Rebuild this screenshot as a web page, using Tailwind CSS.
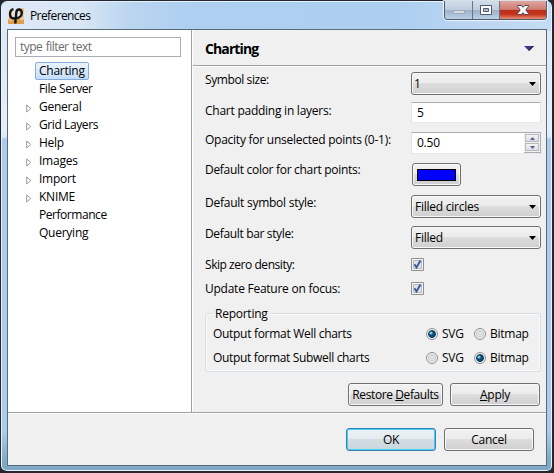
<!DOCTYPE html>
<html lang="en">
<head>
<meta charset="utf-8">
<title>Preferences</title>
<script src="https://cdn.jsdelivr.net/npm/@tailwindcss/browser@4"></script>
</head>
<body class="w-[554px] h-[473px] overflow-hidden bg-[#25262c] text-black text-[12px] leading-[16px] font-['Open_Sans','Noto_Sans',sans-serif] tracking-[-0.25px] whitespace-nowrap">
<div class="w-[554px] h-[473px] flex flex-col rounded-[7px] border border-[#25262f] border-r-2 border-b-2 bg-[linear-gradient(180deg,#b0cff0_0,#b0cff0_28px,#dce8f6_30px,#e6eef8_130px,#dce8f6_136px,#adcbed_138px,#adcbed_430px,#80a9c5_460px)] shadow-[inset_0_0_0_1px_#e5f4fc]">
  <header class="relative h-[29px] shrink-0 mx-px mt-px rounded-t-[6px] flex items-center pl-[6px] bg-[linear-gradient(90deg,#dfe9f7_0,#d8e6f5_80px,#b9d5f0_130px,#aecff1_190px,#abcef1_390px,#bad5f1_460px,#c5dcf3_551px)]">
    <svg class="w-[16px] h-[16px] -mt-[2px]" viewBox="0 0 16 16"><path d="M0 2h5v13H0z" fill="#f0e6d2"/><path d="M0 11l3 2 2-2 3 2 3-3 3 2 2-1v5H0z" fill="#dd9f4c"/><path d="M11 0h5v10l-3 3z" fill="#efc98c"/><path d="M1 7l3 4-3 3z" fill="#efb55a"/><path d="M5.500 1.200C.8 2.500.8 10.500 6 10.500c5 0 7.800-2.500 7.800-5.500 0-4.500-5-4.800-5.500-.5L7.300 15.500" fill="none" stroke="#171310" stroke-width="2.400"/><path d="M5 2.500v6" stroke="#f7dba5"/></svg>
    <h1 class="ml-[6px] -mt-[2px] tracking-[-0.6px]">Preferences</h1>
    <div class="absolute right-[4px] -top-px flex h-[19px] w-[103px] rounded-b-[4px] border border-t-0 border-[#505b6c] overflow-hidden shadow-[0_0_1px_1px_#edf6ff]">
      <div class="w-[28px] border-r border-[#65758a] bg-[linear-gradient(#d1deeb_0,#bfcddd_48%,#9eb1c8_50%,#b9d0e6)] flex justify-center"><svg width="14" height="18" viewBox="0 0 14 18"><rect x="1.500" y="9.500" width="11" height="3" fill="#d6dce6" stroke="#a1acbb"/></svg></div>
      <div class="w-[27px] border-r border-[#65758a] bg-[linear-gradient(#d1deeb_0,#bfcddd_48%,#9eb1c8_50%,#b9d0e6)] flex justify-center"><svg width="14" height="18" viewBox="0 0 14 18"><path d="M1.500 4.500h11v9h-11z" fill="#fafcff" stroke="#505970"/><path d="M4.500 7.500h5v3h-5z" fill="#a9bad4" stroke="#505970"/></svg></div>
      <div class="flex-1 bg-[linear-gradient(#dfa69e_0,#cf7d72_47%,#b92d1a_50%,#c73520_75%,#e29275)] flex justify-center"><svg width="14" height="18" viewBox="0 0 14 18"><path d="M1.500 4.500h4L7 6.300l1.500-1.800h4v1L9.800 9l2.700 3.500v1h-4L7 11.700l-1.500 1.800h-4v-1L4.200 9 1.500 5.500z" fill="#f7f7f9" stroke="#57434d"/></svg></div>
    </div>
  </header>

  <main class="ml-[6px] w-[540px] h-[437px] -mt-[2px] shrink-0 border border-[#586b78] bg-[#f0f0f0] flex flex-col relative">
    <div class="flex h-[382px] shrink-0">
      <nav class="w-[184px] shrink-0 bg-white border-r border-[#a0a0a0] pt-[7px]">
        <div class="ml-[7px] w-[166px] h-[20px] border border-[#abadb3] pl-[4px] leading-[18px] text-[#6d6d6d] tracking-[-0.8px] [word-spacing:1px]"><span class="tracking-[-0.55px]">type filter text</span></div>
        <ul class="mt-[5px] pl-[27px]">
          <li class="h-[18px]"><span class="block w-[54px] h-[18px] rounded-[2px] border border-[#84acdd] bg-linear-to-b from-[#ebf4fd] to-[#c4ddfb] pl-[3px] leading-[16px]">Charting</span></li>
          <li class="h-[18px] pl-[4px] leading-[18px] tracking-[-0.4px]">File Server</li>
          <li class="h-[18px] flex items-center"><svg class="-ml-[9px] mr-[7px] mt-[2px] w-[6px] h-[9px]" viewBox="0 0 6 9"><path d="M.7 1v7L4.800 4.500z" fill="#fff" stroke="#9b9b9b"/></svg>General</li>
          <li class="h-[18px] flex items-center tracking-[-0.4px]"><svg class="-ml-[9px] mr-[7px] mt-[2px] w-[6px] h-[9px]" viewBox="0 0 6 9"><path d="M.7 1v7L4.800 4.500z" fill="#fff" stroke="#9b9b9b"/></svg>Grid Layers</li>
          <li class="h-[18px] flex items-center"><svg class="-ml-[9px] mr-[7px] mt-[2px] w-[6px] h-[9px]" viewBox="0 0 6 9"><path d="M.7 1v7L4.800 4.500z" fill="#fff" stroke="#9b9b9b"/></svg>Help</li>
          <li class="h-[18px] flex items-center"><svg class="-ml-[9px] mr-[7px] mt-[2px] w-[6px] h-[9px]" viewBox="0 0 6 9"><path d="M.7 1v7L4.800 4.500z" fill="#fff" stroke="#9b9b9b"/></svg>Images</li>
          <li class="h-[18px] flex items-center"><svg class="-ml-[9px] mr-[7px] mt-[2px] w-[6px] h-[9px]" viewBox="0 0 6 9"><path d="M.7 1v7L4.800 4.500z" fill="#fff" stroke="#9b9b9b"/></svg>Import</li>
          <li class="h-[18px] flex items-center"><svg class="-ml-[9px] mr-[7px] mt-[2px] w-[6px] h-[9px]" viewBox="0 0 6 9"><path d="M.7 1v7L4.800 4.500z" fill="#fff" stroke="#9b9b9b"/></svg>KNIME</li>
          <li class="h-[18px] pl-[4px] leading-[18px] tracking-[-0.45px]">Performance</li>
          <li class="h-[18px] pl-[4px] leading-[18px]">Querying</li>
        </ul>
      </nav>

      <section class="flex-1 border-l border-white flex flex-col">
        <div class="h-[36px] shrink-0 border-b border-[#a0a0a0] pl-[12px] pr-[12px] flex items-center justify-between">
          <h2 class="font-bold text-[14px] tracking-[-0.9px] mt-[2px]">Charting</h2>
          <svg class="w-[10px] h-[5px] mt-[2px]" viewBox="0 0 10 5"><path d="M0 0h10L5 5z" fill="#40318a"/><path d="M9.500 0L5 4.500" stroke="#111"/></svg>
        </div>
        <div class="border-t border-white pt-[5px] pl-[12px]">
          <div class="flex h-[30px]"><div class="w-[206px] tracking-[-0.4px]">Symbol size:</div>
            <div class="w-[130px] h-[23px] rounded-[3px] border border-[#707070] bg-[linear-gradient(#f2f2f2_0,#ebebeb_48%,#dddddd_50%,#cfcfcf)] shadow-[inset_0_0_0_1px_#f8f8f8] flex items-center justify-between pl-[2px] pr-[4px]">1<svg class="w-[7px] h-[4px]" viewBox="0 0 7 4"><path d="M0 0h7L3.500 4z"/></svg></div></div>
          <div class="flex h-[30px]"><div class="w-[206px] pt-px">Chart padding in layers:</div>
            <div class="w-[130px] h-[21px] border border-t-[#abadb3] border-x-[#e2e3ea] border-b-[#e3e9ef] bg-white pl-[5px] leading-[20px]">5</div></div>
          <div class="flex h-[31px]"><div class="w-[206px]">Opacity for unselected points (0-1):</div>
            <div class="w-[130px] h-[22px] border border-t-[#abadb3] border-l-[#e2e3ea] border-r-[#abadb3] border-b-[#e3e9ef] bg-white pl-[5px] flex justify-between leading-[20px]">0.50
              <div class="w-[16px] bg-[#f0f0f0] flex flex-col gap-px p-px border-b border-[#abadb3]">
                <div class="flex-1 border border-[#b9bac0] bg-linear-to-b from-[#f4f4f4] to-[#dcdcdc] flex items-center justify-center"><svg width="5" height="3" viewBox="0 0 5 3"><path d="M0 3h5L2.500 0z" fill="#4a63a3"/></svg></div>
                <div class="flex-1 border border-[#b9bac0] bg-linear-to-b from-[#f4f4f4] to-[#dcdcdc] flex items-center justify-center"><svg width="5" height="3" viewBox="0 0 5 3"><path d="M0 0h5L2.500 3z" fill="#4a63a3"/></svg></div>
              </div></div></div>
          <div class="flex h-[32px]"><div class="w-[207px] -mt-px tracking-[-0.3px]">Default color for chart points:</div>
            <div class="w-[49px] h-[23px] rounded-[3px] border border-[#707070] bg-[linear-gradient(#f2f2f2_0,#ebebeb_48%,#dddddd_50%,#cfcfcf)] shadow-[inset_0_0_0_1px_#f8f8f8] flex items-center justify-center"><div class="w-[39px] h-[12px] mt-px border border-black bg-[#0000ff]"></div></div></div>
          <div class="flex h-[31px]"><div class="w-[206px]">Default symbol style:</div>
            <div class="w-[130px] h-[23px] rounded-[3px] border border-[#707070] bg-[linear-gradient(#f2f2f2_0,#ebebeb_48%,#dddddd_50%,#cfcfcf)] shadow-[inset_0_0_0_1px_#f8f8f8] flex items-center justify-between pl-[3px] pr-[4px]">Filled circles<svg class="w-[7px] h-[4px]" viewBox="0 0 7 4"><path d="M0 0h7L3.500 4z"/></svg></div></div>
          <div class="flex h-[32px]"><div class="w-[206px] tracking-[-0.35px]">Default bar style:</div>
            <div class="w-[130px] h-[23px] rounded-[3px] border border-[#707070] bg-[linear-gradient(#f2f2f2_0,#ebebeb_48%,#dddddd_50%,#cfcfcf)] shadow-[inset_0_0_0_1px_#f8f8f8] flex items-center justify-between pl-[3px] pr-[4px]">Filled<svg class="w-[7px] h-[4px]" viewBox="0 0 7 4"><path d="M0 0h7L3.500 4z"/></svg></div></div>
          <div class="flex h-[24px]"><div class="w-[206px] -mt-px tracking-[-0.45px]">Skip zero density:</div>
            <svg class="w-[13px] h-[13px]" viewBox="0 0 13 13"><path d="M.5.500h12v12H.5z" fill="#f4f4f4" stroke="#8e8f8f"/><path d="M2.500 2.500h8v8h-8z" fill="#dfe3e9" stroke="#b5bac3"/><path d="M3.500 6.300L5.500 9.500 9.500 2.500" fill="none" stroke="#41579a" stroke-width="1.900"/></svg></div>
          <div class="flex h-[25px]"><div class="w-[206px] -mt-px">Update Feature on focus:</div>
            <svg class="w-[13px] h-[13px]" viewBox="0 0 13 13"><path d="M.5.500h12v12H.5z" fill="#f4f4f4" stroke="#8e8f8f"/><path d="M2.500 2.500h8v8h-8z" fill="#dfe3e9" stroke="#b5bac3"/><path d="M3.500 6.300L5.500 9.500 9.500 2.500" fill="none" stroke="#41579a" stroke-width="1.900"/></svg></div>
          <fieldset class="w-[336px] h-[65px] rounded-[3px] border border-[#d5dfe5] shadow-[inset_0_0_0_1px_#fafafa] pl-[7px]">
            <legend class="px-[2px] h-[13px] leading-[13px]">Reporting</legend>
            <div class="flex items-center h-[24px] mt-[2px]"><span class="w-[213px] tracking-[-0.3px]">Output format Well charts</span>
              <svg class="w-[12px] h-[12px]" viewBox="0 0 12 12"><circle cx="6" cy="6" r="5.500" fill="#f6f6f6" stroke="#8e8f8f"/><circle cx="6" cy="6" r="3.500" fill="#0d4c76" stroke="#173852"/><circle cx="5" cy="5" r="1.600" fill="#72c8e8"/></svg><span class="w-[32px] ml-[4px]">SVG</span>
              <svg class="w-[12px] h-[12px]" viewBox="0 0 12 12"><circle cx="6" cy="6" r="5.500" fill="#f6f6f6" stroke="#8e8f8f"/><circle cx="6" cy="6" r="3.500" fill="#dfe0e2" stroke="#c6c8ca"/></svg><span class="ml-[4px]">Bitmap</span></div>
            <div class="flex items-center h-[24px]"><span class="w-[213px] tracking-[-0.33px]">Output format Subwell charts</span>
              <svg class="w-[12px] h-[12px]" viewBox="0 0 12 12"><circle cx="6" cy="6" r="5.500" fill="#f6f6f6" stroke="#8e8f8f"/><circle cx="6" cy="6" r="3.500" fill="#dfe0e2" stroke="#c6c8ca"/></svg><span class="w-[32px] ml-[4px]">SVG</span>
              <svg class="w-[12px] h-[12px]" viewBox="0 0 12 12"><circle cx="6" cy="6" r="5.500" fill="#f6f6f6" stroke="#8e8f8f"/><circle cx="6" cy="6" r="3.500" fill="#0d4c76" stroke="#173852"/><circle cx="5" cy="5" r="1.600" fill="#72c8e8"/></svg><span class="ml-[4px]">Bitmap</span></div>
          </fieldset>
          <div class="flex mt-[11px] ml-[143px] gap-[7px]">
            <button class="w-[95px] h-[23px] rounded-[3px] border border-[#707070] bg-[linear-gradient(#f2f2f2_0,#ebebeb_48%,#dddddd_50%,#cfcfcf)] shadow-[inset_0_0_0_1px_#f8f8f8] tracking-[-0.4px]">Restore <u>D</u>efaults</button>
            <button class="w-[90px] h-[23px] rounded-[3px] border border-[#707070] bg-[linear-gradient(#f2f2f2_0,#ebebeb_48%,#dddddd_50%,#cfcfcf)] shadow-[inset_0_0_0_1px_#f8f8f8]"><u>A</u>pply</button>
          </div>
        </div>
      </section>
    </div>
    <footer class="flex-1 border-t border-[#a0a0a0] flex gap-[8px] pl-[338px] pt-[15px] shadow-[inset_0_1px_0_#fff]">
      <button class="w-[90px] h-[23px] rounded-[3px] border border-[#3c7fb1] bg-[linear-gradient(#edf3f6_0,#e3ebef_48%,#d3dde3_50%,#c9d7df)] shadow-[inset_0_0_0_1px_#48d0f4]">OK</button>
      <button class="w-[90px] h-[23px] rounded-[3px] border border-[#707070] bg-[linear-gradient(#f2f2f2_0,#ebebeb_48%,#dddddd_50%,#cfcfcf)] shadow-[inset_0_0_0_1px_#f8f8f8]">Cancel</button>
    </footer>
  </main>
</div>
</body>
</html>
